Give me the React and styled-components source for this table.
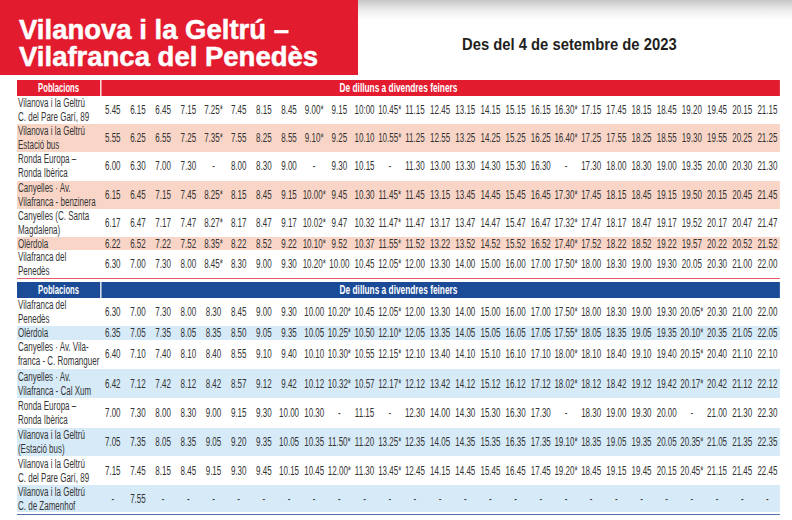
import React from 'react';
import styled, { createGlobalStyle } from 'styled-components';

const SCALE = 0.64;
const TABLE_W = 763;
const STATION_W = 130;

const GlobalStyle = createGlobalStyle`
  html, body { margin: 0; padding: 0; background: #fff; overflow: hidden; }
  body { font-family: "Liberation Sans", Arial, sans-serif; }
  * { box-sizing: border-box; }
`;

const Page = styled.div`
  width: 792px;
  height: 520px;
  overflow: hidden;
  background: #fff;
`;

const TopBar = styled.header`
  display: flex;
  height: 75px;
  background: linear-gradient(#c6c6c6 0px, #ececec 10px, #fff 20px);
`;

const Banner = styled.div`
  width: 358px;
  background: #e31b2f;
  padding: 16px 0 0 19px;
`;

const Title = styled.h1`
  margin: 0;
  color: #fff;
  font-size: 27.5px;
  line-height: 27px;
  font-weight: 700;
  -webkit-text-stroke: 0.5px #fff;
  white-space: nowrap;
`;

const DateBox = styled.div`
  flex: 1;
  display: flex;
  justify-content: center;
  align-items: flex-start;
  padding: 35px 12px 0 0;
`;

const DateText = styled.p`
  margin: 0;
  font-size: 17px;
  line-height: 20px;
  font-weight: 700;
  color: #231f20;
  white-space: nowrap;
  transform: scaleX(0.87);
`;

const Timetables = styled.main`
  padding: 4.5px 0 0 17px;
`;

const Condensed = styled.div`
  width: ${TABLE_W / SCALE}px;
  transform: scaleX(${SCALE});
  transform-origin: 0 0;
  display: flex;
  flex-direction: column;
  gap: ${(p) => p.$gap}px;
`;

const Timetable = styled.section`
  border-bottom: 1.6px solid ${(p) => p.$rule};
  padding-bottom: ${(p) => p.$tail}px;
`;

const HeaderRow = styled.div`
  display: grid;
  grid-template-columns: ${STATION_W}px 1fr;
  column-gap: 2px;
  height: ${(p) => p.$h}px;
`;

const HeaderCell = styled.div`
  background: ${(p) => p.$bg};
  color: #fff;
  font-weight: 700;
  font-size: ${(p) => p.$size}px;
  display: flex;
  align-items: center;
  justify-content: center;
  padding-right: ${(p) => p.$offset || 0}px;
  white-space: nowrap;
`;

const Row = styled.div`
  display: grid;
  grid-template-columns: ${STATION_W}px repeat(27, minmax(0, 1fr));
  align-items: center;
  height: ${(p) => p.$h}px;
  background: ${(p) => p.$bg};
`;

const Station = styled.div`
  padding-left: 1.5px;
  font-size: 12.5px;
  line-height: 14px;
  color: #353535;
  white-space: nowrap;
`;

const Time = styled.div`
  text-align: center;
  font-size: 12.5px;
  line-height: 14px;
  color: #333;
  white-space: nowrap;
`;

const outbound = [
  { name: ['Vilanova i la Geltrú', 'C. del Pare Garí, 89'], h: 28,
    times: '5.45 6.15 6.45 7.15 7.25* 7.45 8.15 8.45 9.00* 9.15 10:00 10.45* 11.15 12.45 13.15 14.15 15.15 16.15 16.30* 17.15 17.45 18.15 18.45 19.20 19.45 20.15 21.15' },
  { name: ['Vilanova i la Geltrú', 'Estació bus'], h: 28, shaded: true,
    times: '5.55 6.25 6.55 7.25 7.35* 7.55 8.25 8.55 9.10* 9.25 10.10 10.55* 11.25 12.55 13.25 14.25 15.25 16.25 16.40* 17.25 17.55 18.25 18.55 19.30 19.55 20.25 21.25' },
  { name: ['Ronda Europa –', 'Ronda Ibèrica'], h: 28.5,
    times: '6.00 6.30 7.00 7.30 - 8.00 8.30 9.00 - 9.30 10.15 - 11.30 13.00 13.30 14.30 15.30 16.30 - 17.30 18.00 18.30 19.00 19.35 20.00 20.30 21.30' },
  { name: ['Canyelles · Av.', 'Vilafranca - benzinera'], h: 28, shaded: true,
    times: '6.15 6.45 7.15 7.45 8.25* 8.15 8.45 9.15 10.00* 9.45 10.30 11.45* 11.45 13.15 13.45 14.45 15.45 16.45 17.30* 17.45 18.15 18.45 19.15 19.50 20.15 20.45 21.45' },
  { name: ['Canyelles (C. Santa', 'Magdalena)'], h: 28,
    times: '6.17 6.47 7.17 7.47 8.27* 8.17 8.47 9.17 10.02* 9.47 10.32 11.47* 11.47 13.17 13.47 14.47 15.47 16.47 17.32* 17.47 18.17 18.47 19.17 19.52 20.17 20.47 21.47' },
  { name: ['Olèrdola'], h: 13.5, shaded: true,
    times: '6.22 6.52 7.22 7.52 8.35* 8.22 8.52 9.22 10.10* 9.52 10.37 11.55* 11.52 13.22 13.52 14.52 15.52 16.52 17.40* 17.52 18.22 18.52 19.22 19.57 20.22 20.52 21.52' },
  { name: ['Vilafranca del', 'Penedès'], h: 28,
    times: '6.30 7.00 7.30 8.00 8.45* 8.30 9.00 9.30 10.20* 10.00 10.45 12.05* 12.00 13.30 14.00 15.00 16.00 17.00 17.50* 18.00 18.30 19.00 19.30 20.05 20.30 21.00 22.00' },
];

const inbound = [
  { name: ['Vilafranca del', 'Penedès'], h: 28,
    times: '6.30 7.00 7.30 8.00 8.30 8.45 9.00 9.30 10.00 10.20* 10.45 12.05* 12.00 13.30 14.00 15.00 16.00 17.00 17.50* 18.00 18.30 19.00 19.30 20.05* 20.30 21.00 22.00' },
  { name: ['Olèrdola'], h: 14, shaded: true,
    times: '6.35 7.05 7.35 8.05 8.35 8.50 9.05 9.35 10.05 10.25* 10.50 12.10* 12.05 13.35 14.05 15.05 16.05 17.05 17.55* 18.05 18.35 19.05 19.35 20.10* 20.35 21.05 22.05' },
  { name: ['Canyelles · Av. Vila-', 'franca - C. Romanguer'], h: 29.5,
    times: '6.40 7.10 7.40 8.10 8.40 8.55 9.10 9.40 10.10 10.30* 10.55 12.15* 12.10 13.40 14.10 15.10 16.10 17.10 18.00* 18.10 18.40 19.10 19.40 20.15* 20.40 21.10 22.10' },
  { name: ['Canyelles · Av.', 'Vilafranca - Cal Xum'], h: 29, shaded: true,
    times: '6.42 7.12 7.42 8.12 8.42 8.57 9.12 9.42 10.12 10.32* 10.57 12.17* 12.12 13.42 14.12 15.12 16.12 17.12 18.02* 18.12 18.42 19.12 19.42 20.17* 20.42 21.12 22.12' },
  { name: ['Ronda Europa –', 'Ronda Ibèrica'], h: 29.5,
    times: '7.00 7.30 8.00 8.30 9.00 9.15 9.30 10.00 10.30 - 11.15 - 12.30 14.00 14.30 15.30 16.30 17.30 - 18.30 19.00 19.30 20.00 - 21.00 21.30 22.30' },
  { name: ['Vilanova i la Geltrú', '(Estació bus)'], h: 28.5, shaded: true,
    times: '7.05 7.35 8.05 8.35 9.05 9.20 9.35 10.05 10.35 11.50* 11.20 13.25* 12.35 14.05 14.35 15.35 16.35 17.35 19.10* 18.35 19.05 19.35 20.05 20.35* 21.05 21.35 22.35' },
  { name: ['Vilanova i la Geltrú', 'C. del Pare Garí, 89'], h: 29,
    times: '7.15 7.45 8.15 8.45 9.15 9.30 9.45 10.15 10.45 12.00* 11.30 13.45* 12.45 14.15 14.45 15.45 16.45 17.45 19.20* 18.45 19.15 19.45 20.15 20.45* 21.15 21.45 22.45' },
  { name: ['Vilanova i la Geltrú', 'C. de Zamenhof'], h: 27, shaded: true,
    times: '- 7.55 - - - - - - - - - - - - - - - - - - - - - - - - -' },
];

const themes = {
  red: { accent: '#e31b2f', stripe: '#f9d5c7', rule: '#e65a66', headH: 16.5, tail: 0 },
  blue: { accent: '#1b4a96', stripe: '#d6eaf8', rule: '#5274ab', headH: 16, tail: 1.5 },
};

function Schedule({ theme, rows }) {
  return (
    <Timetable $rule={theme.rule} $tail={theme.tail}>
      <HeaderRow $h={theme.headH}>
        <HeaderCell $bg={theme.accent} $size={12}>Poblacions</HeaderCell>
        <HeaderCell $bg={theme.accent} $size={13} $offset={STATION_W + 2}>
          De dilluns a divendres feiners
        </HeaderCell>
      </HeaderRow>
      {rows.map((r, i) => (
        <Row key={i} $h={r.h} $bg={r.shaded ? theme.stripe : '#fff'}>
          <Station>
            {r.name.map((line, j) => (
              <div key={j}>{line}</div>
            ))}
          </Station>
          {r.times.split(' ').map((t, k) => (
            <Time key={k}>{t}</Time>
          ))}
        </Row>
      ))}
    </Timetable>
  );
}

export default function App() {
  return (
    <Page>
      <GlobalStyle />
      <TopBar>
        <Banner>
          <Title>
            Vilanova i la Geltrú –<br />
            Vilafranca del Penedès
          </Title>
        </Banner>
        <DateBox>
          <DateText>Des del 4 de setembre de 2023</DateText>
        </DateBox>
      </TopBar>
      <Timetables>
        <Condensed $gap={2.5}>
          <Schedule theme={themes.red} rows={outbound} />
          <Schedule theme={themes.blue} rows={inbound} />
        </Condensed>
      </Timetables>
    </Page>
  );
}
